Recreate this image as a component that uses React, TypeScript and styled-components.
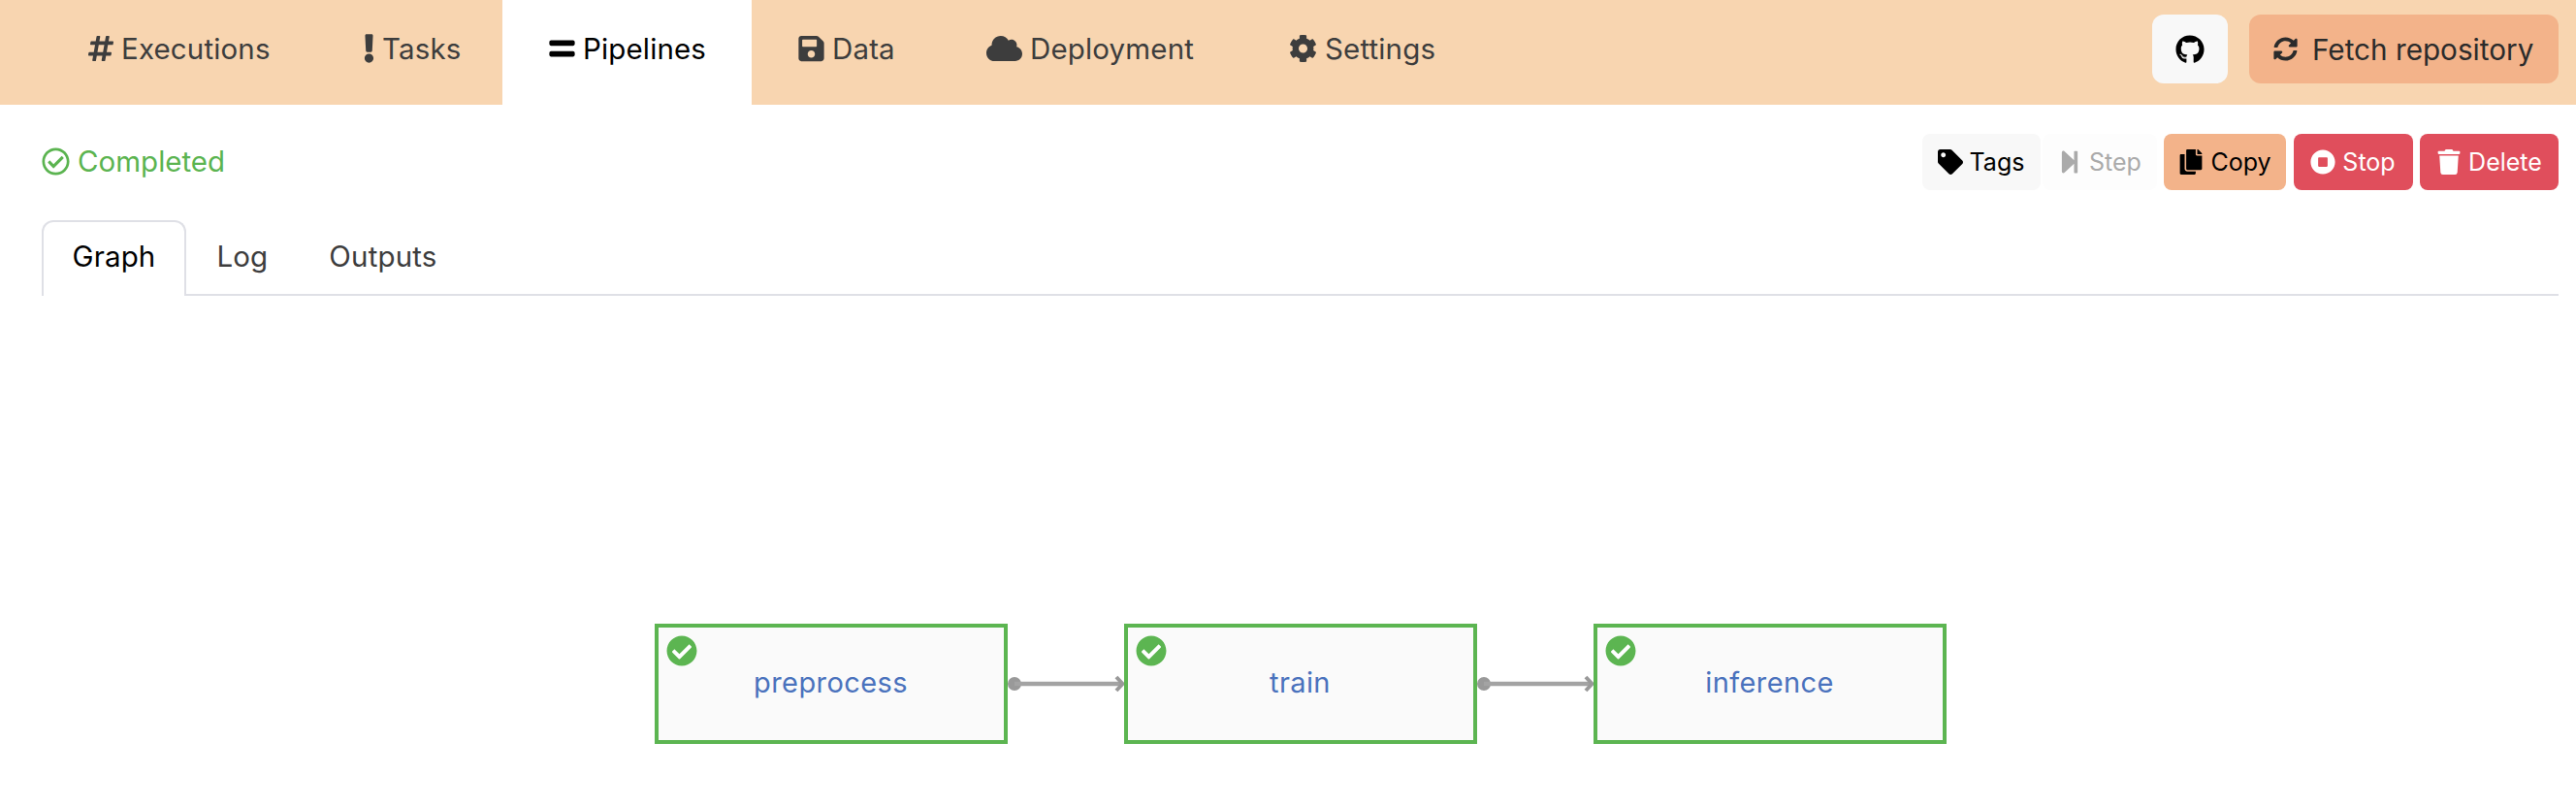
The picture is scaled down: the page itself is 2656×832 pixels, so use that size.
import { createGlobalStyle, styled } from 'styled-components';
import {
	FaCheckCircle,
	FaCloud,
	FaCog,
	FaCopy,
	FaEquals,
	FaExclamation,
	FaGithub,
	FaHashtag,
	FaRegCheckCircle,
	FaSave,
	FaStepForward,
	FaStopCircle,
	FaSyncAlt,
	FaTag,
	FaTrash,
} from 'react-icons/fa';
import type { ReactNode } from 'react';

const GlobalStyle = createGlobalStyle`
	html, body {
		margin: 0;
		background: #fff;
		font-family: Inter, 'Noto Sans', sans-serif;
		color: #3d3d3d;
	}
`;

const NAV_ITEMS: { label: string; icon: ReactNode; iconWidth: number; labelWidth: number }[] = [
	{ label: 'Executions', icon: <FaHashtag />, iconWidth: 26, labelWidth: 154 },
	{ label: 'Tasks', icon: <FaExclamation />, iconWidth: 11, labelWidth: 76 },
	{ label: 'Pipelines', icon: <FaEquals />, iconWidth: 27, labelWidth: 126 },
	{ label: 'Data', icon: <FaSave />, iconWidth: 27, labelWidth: 63 },
	{ label: 'Deployment', icon: <FaCloud />, iconWidth: 37, labelWidth: 171 },
	{ label: 'Settings', icon: <FaCog />, iconWidth: 29, labelWidth: 117 },
];

const NODES = ['preprocess', 'train', 'inference'];

const App = () => (
	<>
		<GlobalStyle />
		<Nav>
			<NavTabs>
				{NAV_ITEMS.map((item) => (
					<NavTab key={item.label} $active={item.label === 'Pipelines'}>
						<NavIcon $width={item.iconWidth}>{item.icon}</NavIcon>
						<NavLabel $width={item.labelWidth}>{item.label}</NavLabel>
					</NavTab>
				))}
			</NavTabs>
			<NavActions>
				<GithubButton title="GitHub">
					<FaGithub />
				</GithubButton>
				<FetchButton>
					<FaSyncAlt />
					Fetch repository
				</FetchButton>
			</NavActions>
		</Nav>
		<Content>
			<Toolbar>
				<Status>
					<FaRegCheckCircle />
					Completed
				</Status>
				<Actions>
					<ActionButton $variant="light" $width={122}>
						<FaTag />
						Tags
					</ActionButton>
					<ActionButton $variant="disabled" $width={118}>
						<FaStepForward />
						Step
					</ActionButton>
					<ActionButton $variant="primary" $width={126}>
						<FaCopy />
						Copy
					</ActionButton>
					<ActionButton $variant="danger" $width={123}>
						<FaStopCircle />
						Stop
					</ActionButton>
					<ActionButton $variant="danger" $width={143}>
						<FaTrash />
						Delete
					</ActionButton>
				</Actions>
			</Toolbar>
			<Tabs>
				<Tab $active>Graph</Tab>
				<Tab>Log</Tab>
				<Tab>Outputs</Tab>
			</Tabs>
			<Graph>
				{NODES.map((name, i) => (
					<GraphStep key={name}>
						{i > 0 && (
							<Edge viewBox="0 0 120 24" width="120" height="24">
								<circle cx="7" cy="12" r="7" fill="#999" />
								<path d="M7 12H118" stroke="#a3a3a3" strokeWidth="4.5" fill="none" />
								<path d="M112 5l6.5 7-6.5 7" stroke="#999" strokeWidth="4" fill="none" />
							</Edge>
						)}
						<Node>
							<NodeBadge>
								<FaCheckCircle />
							</NodeBadge>
							{name}
						</Node>
					</GraphStep>
				))}
			</Graph>
		</Content>
	</>
);

export default App;

const Nav = styled.nav`
	display: flex;
	justify-content: space-between;
	height: 108px;
	padding: 0 18px 0 43px;
	background: #f8d5b0;
`;

const NavTabs = styled.div`
	display: flex;
`;

const NavTab = styled.a<{ $active?: boolean }>`
	display: flex;
	align-items: center;
	gap: 8px;
	padding: 0 48px 8px;
	font-size: 29.5px;
	letter-spacing: 0.15px;
	color: ${(p) => (p.$active ? '#000' : '#3d3d3d')};
	background: ${(p) => (p.$active ? '#fff' : 'transparent')};
`;

const NavIcon = styled.span<{ $width: number }>`
	display: flex;
	width: ${(p) => p.$width}px;
	height: 30px;

	svg {
		width: 100%;
		height: 100%;
	}
`;

const NavLabel = styled.span<{ $width: number }>`
	width: ${(p) => p.$width}px;
	white-space: nowrap;
`;

const NavActions = styled.div`
	display: flex;
	align-items: flex-start;
	gap: 22px;
	padding-top: 15px;
`;

const GithubButton = styled.button`
	display: flex;
	align-items: center;
	justify-content: center;
	width: 78px;
	height: 71px;
	border: 0;
	border-radius: 12px;
	background: #f8f8f8;
	color: #000;
	font-size: 30px;
`;

const FetchButton = styled.button`
	display: flex;
	align-items: center;
	gap: 15px;
	width: 319px;
	height: 71px;
	padding: 0 0 0 25px;
	border: 0;
	border-radius: 12px;
	background: #f3b38a;
	color: #2b2b2b;
	font: inherit;
	font-size: 29.7px;

	svg {
		font-size: 25px;
		flex: none;
	}
`;

const Content = styled.main`
	padding: 0 18px 0 43px;
`;

const Toolbar = styled.div`
	display: flex;
	align-items: center;
	justify-content: space-between;
	padding-top: 30px;
`;

const Status = styled.div`
	display: flex;
	align-items: center;
	gap: 8px;
	padding-bottom: 2px;
	color: #5bb450;
	font-size: 29.5px;

	svg {
		font-size: 29px;
	}
`;

const Actions = styled.div`
	display: flex;
	gap: 7.5px;
`;

const VARIANTS = {
	light: 'background: #f8f8f8; color: #000;',
	disabled: 'background: #fdfdfd; color: #aaa; margin-left: -5.5px;',
	primary: 'background: #f3b38a; color: #000;',
	danger: 'background: #e04e5c; color: #fff;',
};

const ActionButton = styled.button<{ $variant: keyof typeof VARIANTS; $width: number }>`
	display: flex;
	flex: none;
	align-items: center;
	justify-content: center;
	gap: 7px;
	width: ${(p) => p.$width}px;
	height: 58px;
	padding: 0;
	border: 0;
	border-radius: 8px;
	font: inherit;
	font-size: 25px;
	${(p) => VARIANTS[p.$variant]}

	svg {
		font-size: 26px;
	}
`;

const Tabs = styled.div`
	display: flex;
	height: 78px;
	margin-top: 31px;
	box-sizing: border-box;
	border-bottom: 2px solid #dfe0e6;
`;

const Tab = styled.a<{ $active?: boolean }>`
	display: flex;
	align-items: center;
	height: 78px;
	box-sizing: border-box;
	padding: 0 29.5px 7px;
	font-size: 29.5px;
	letter-spacing: 0.15px;
	border: 2px solid ${(p) => (p.$active ? '#dfe0e6' : 'transparent')};
	border-bottom: 0;
	border-radius: 12px 12px 0 0;
	color: ${(p) => (p.$active ? '#000' : '#3d3d3d')};
	background: ${(p) => (p.$active ? '#fff' : 'transparent')};
`;

const Graph = styled.div`
	display: flex;
	justify-content: center;
	padding-top: 338px;
`;

const GraphStep = styled.div`
	display: flex;
	align-items: center;
`;

const Edge = styled.svg`
	display: block;
`;

const Node = styled.div`
	position: relative;
	display: flex;
	align-items: center;
	justify-content: center;
	box-sizing: border-box;
	width: 364px;
	height: 124px;
	padding-bottom: 3px;
	border: 4px solid #5cb551;
	background: #fafafa;
	color: #4a72bd;
	font-size: 29px;
	letter-spacing: 0.4px;
`;

const NodeBadge = styled.span`
	position: absolute;
	top: 8px;
	left: 8px;
	display: flex;
	width: 32px;
	height: 32px;
	border-radius: 50%;
	background: #fff;
	color: #5cb551;
	font-size: 32px;
`;
